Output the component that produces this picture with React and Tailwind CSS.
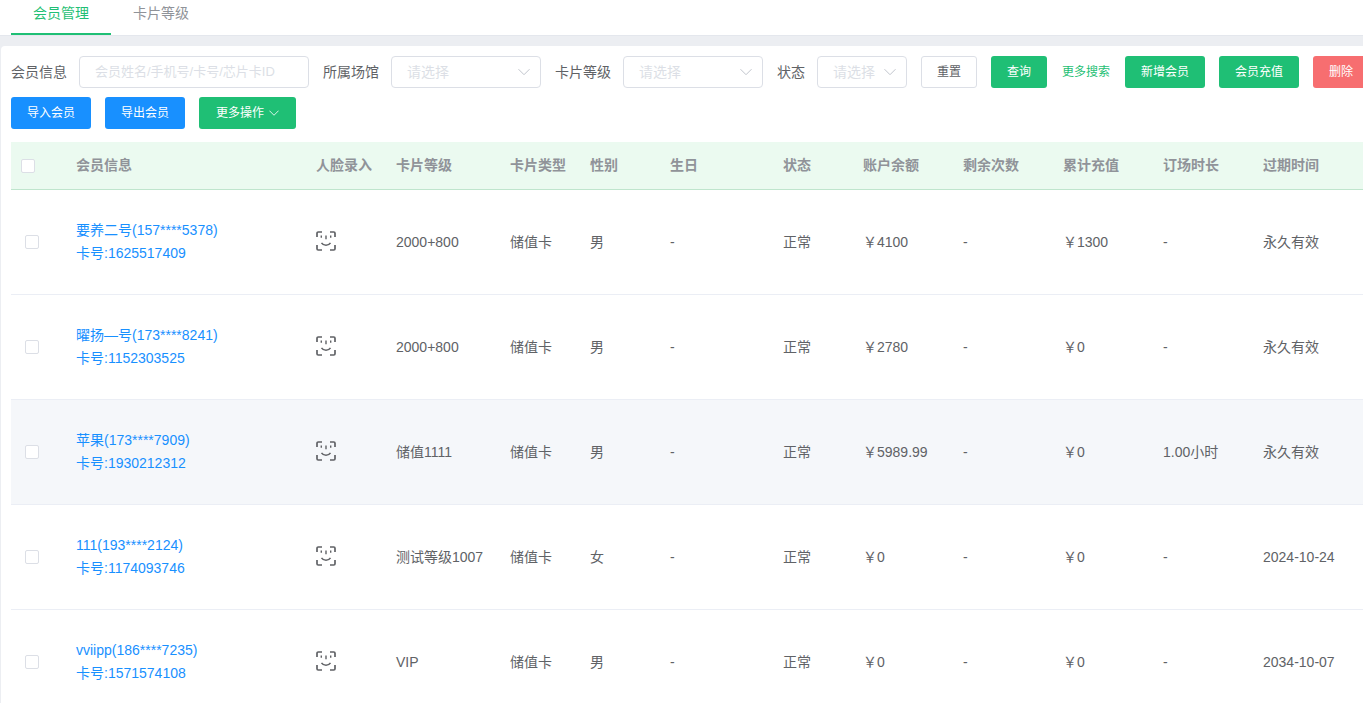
const FF = "font-['Liberation_Sans','Noto_Sans_CJK_SC',sans-serif]";

const Chevron = ({ className = "" }) => (
  <svg width="12" height="12" viewBox="0 0 12 12" fill="none" stroke="currentColor" strokeWidth="1" className={className}>
    <path d="M0.500 3.200 6 8.700l5.500-5.500" />
  </svg>
);

const Face = () => (
  <svg width="20" height="20" viewBox="0 0 20 20" fill="none" stroke="#606266" strokeWidth="1.700">
    <path d="M1 6V2.200A1.200 1.200 0 0 1 2.200 1H6M14 1h3.800A1.200 1.200 0 0 1 19 2.200V6M1 14v3.800A1.200 1.200 0 0 0 2.200 19H6M14 19h3.800a1.200 1.200 0 0 0 1.200-1.200V14" />
    <path d="M5.500 11.800c1 1.600 2.700 2.400 4.500 2.400s3.500-.8 4.500-2.400" strokeWidth="1.500" />
    <path d="M5.300 4.500v2.200M14.700 4.500v2.200M10 4.500v3.700" strokeWidth="1.400" />
  </svg>
);

const Checkbox = () => <span className="block h-[14px] w-[14px] rounded-[2px] border border-[#dcdfe6] bg-white" />;

const Select = ({ w }) => (
  <div className={`flex h-[32px] items-center justify-between rounded-[4px] border border-[#dcdfe6] bg-white pl-[15px] pr-[10px] text-[14px] text-[#dcdfe6] ${w}`}>
    <span>请选择</span>
    <Chevron className="text-[#c0c4cc]" />
  </div>
);

const Label = ({ children }) => <span className="shrink-0 text-[14px] text-[#606266]">{children}</span>;

const Btn = ({ w, bg, children }) => (
  <button className={`flex h-[32px] shrink-0 items-center justify-center rounded-[3px] text-[12px] text-white ${w} ${bg}`}>{children}</button>
);

const rows = [
  ["要养二号(157****5378)", "1625517409", "2000+800", "储值卡", "男", "￥4100", "￥1300", "-", "永久有效"],
  ["曜扬—号(173****8241)", "1152303525", "2000+800", "储值卡", "男", "￥2780", "￥0", "-", "永久有效"],
  ["苹果(173****7909)", "1930212312", "储值1111", "储值卡", "男", "￥5989.99", "￥0", "1.00小时", "永久有效"],
  ["111(193****2124)", "1174093746", "测试等级1007", "储值卡", "女", "￥0", "￥0", "-", "2024-10-24"],
  ["vviipp(186****7235)", "1571574108", "VIP", "储值卡", "男", "￥0", "￥0", "-", "2034-10-07"],
];

const cols = "grid grid-cols-[65px_240px_80px_114px_80px_80px_113px_80px_100px_100px_100px_100px_1fr] items-center";

const headers = ["会员信息", "人脸录入", "卡片等级", "卡片类型", "性别", "生日", "状态", "账户余额", "剩余次数", "累计充值", "订场时长", "过期时间"];

export default function App() {
  return (
    <div className={`h-[703px] w-[1363px] overflow-hidden bg-[#eceef2] ${FF}`}>
      <div className="flex h-[36px] border-b border-[#e4e7ed] bg-white pl-[11px] text-[14px]">
        <div className="flex h-[35px] w-[100px] items-start justify-center border-b-2 border-[#1fbf75] pt-[3px] text-[#1fbf75]">会员管理</div>
        <div className="flex w-[100px] items-start justify-center pt-[3px] text-[#909399]">卡片等级</div>
      </div>
      <div className="ml-[1px] mt-[10px] h-[700px] rounded-tl-[4px] bg-white pl-[10px] pt-[10px]">
        <div className="flex h-[32px] w-[1400px] items-center">
          <Label>会员信息</Label>
          <div className="ml-[12px] flex h-[32px] w-[230px] items-center rounded-[4px] border border-[#dcdfe6] pl-[15px] text-[13px] text-[#dcdfe6]">会员姓名/手机号/卡号/芯片卡ID</div>
          <span className="ml-[14px]"><Label>所属场馆</Label></span>
          <div className="ml-[12px]"><Select w="w-[150px]" /></div>
          <span className="ml-[14px]"><Label>卡片等级</Label></span>
          <div className="ml-[12px]"><Select w="w-[140px]" /></div>
          <span className="ml-[14px]"><Label>状态</Label></span>
          <div className="ml-[12px]"><Select w="w-[90px]" /></div>
          <button className="ml-[14px] h-[32px] w-[56px] rounded-[3px] border border-[#dcdfe6] text-[12px] text-[#606266]">重置</button>
          <div className="ml-[14px]"><Btn w="w-[56px]" bg="bg-[#1fbf75]">查询</Btn></div>
          <span className="ml-[15px] w-[48px] shrink-0 text-[12px] text-[#1fbf75]">更多搜索</span>
          <div className="ml-[15px]"><Btn w="w-[80px]" bg="bg-[#1fbf75]">新增会员</Btn></div>
          <div className="ml-[14px]"><Btn w="w-[80px]" bg="bg-[#1fbf75]">会员充值</Btn></div>
          <div className="ml-[14px]"><Btn w="w-[56px]" bg="bg-[#f76e70]">删除</Btn></div>
        </div>
        <div className="mt-[9px] flex gap-[14px]">
          <Btn w="w-[80px]" bg="bg-[#1890ff]">导入会员</Btn>
          <Btn w="w-[80px]" bg="bg-[#1890ff]">导出会员</Btn>
          <Btn w="w-[97px]" bg="bg-[#1fbf75]">
            更多操作
            <Chevron className="ml-[5px] h-[10px] w-[10px]" />
          </Btn>
        </div>
        <div className="mt-[13px]">
          <div className={`${cols} h-[48px] border-b border-[#bfe5cd] bg-[#ebfaf0] text-[14px] font-bold text-[#909399]`}>
            <div className="pl-[10px]"><Checkbox /></div>
            {headers.map((h) => <div key={h}>{h}</div>)}
          </div>
          {rows.map((r, i) => (
            <div key={r[1]} className={`${cols} h-[105px] border-b border-[#ebeef5] text-[14px] text-[#606266] ${i === 2 ? "bg-[#f5f7fa]" : "bg-white"}`}>
              <div className="pl-[14px]"><Checkbox /></div>
              <div className="leading-[23px] text-[#1890ff]">
                <div>{r[0]}</div>
                <div>卡号:{r[1]}</div>
              </div>
              <div className="pb-[3px]"><Face /></div>
              <div>{r[2]}</div>
              <div>{r[3]}</div>
              <div>{r[4]}</div>
              <div>-</div>
              <div>正常</div>
              <div>{r[5]}</div>
              <div>-</div>
              <div>{r[6]}</div>
              <div>{r[7]}</div>
              <div>{r[8]}</div>
            </div>
          ))}
        </div>
      </div>
    </div>
  );
}
